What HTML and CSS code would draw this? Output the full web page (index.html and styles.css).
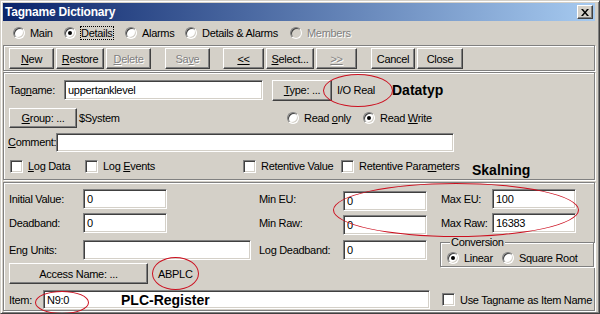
FILE: index.html
```html
<!doctype html>
<html lang="en">
    <head>
        <meta charset="UTF-8" />
        <title>Tagname Dictionary</title>
        <link rel="stylesheet" href="styles.css">
    </head>
    <body>
        <div class="window">
            <div class="titlebar">
                <span class="title">Tagname Dictionary</span>
                <span class="close">
                    <svg width="8" height="7" viewBox="0 0 8 7"><path d="M0 0h2l2 2.4L6 0h2L5 3.5 8 7H6L4 4.6 2 7H0l3-3.5z" fill="#000"/></svg>
                </span>
            </div>

            <div class="tabs">
                <div class="radio tab-main"><span class="dot"></span><span>Main</span></div>
                <div class="radio tab-details"><span class="dot on"></span><span class="focus">Details</span></div>
                <div class="radio tab-alarms"><span class="dot"></span><span>Alarms</span></div>
                <div class="radio tab-both"><span class="dot"></span><span>Details &amp; Alarms</span></div>
                <div class="radio disabled"><span class="dot"></span><span>Members</span></div>
            </div>

            <div class="toolbar etched">
                <div class="btn-group first">
                    <button class="btn w45"><u>N</u>ew</button>
                    <button class="btn w48"><u>R</u>estore</button>
                    <button class="btn w45 disabled"><u>D</u>elete</button>
                </div>
                <div class="btn-group spaced">
                    <button class="btn w45 disabled">Sa<u>v</u>e</button>
                </div>
                <div class="btn-group spaced2">
                    <button class="btn w41"><u>&lt;&lt;</u></button>
                    <button class="btn w48"><u>S</u>elect...</button>
                    <button class="btn w41 disabled"><u>&gt;&gt;</u></button>
                </div>
                <div class="btn-group spaced">
                    <button class="btn w44">Cancel</button>
                    <button class="btn w46">Close</button>
                </div>
            </div>

            <div class="panel upper etched">
                <div class="row r1">
                    <span class="lbl tag-lbl">Tag<u>n</u>ame:</span>
                    <input class="field tag-field" type="text" value="uppertanklevel" readonly />
                    <button class="btn type-btn"><u>T</u>ype: ...</button>
                    <span class="type-val">I/O Real</span>
                    <span class="note">Datatyp</span>
                </div>
                <div class="row r2">
                    <button class="btn group-btn"><u>G</u>roup: ...</button>
                    <span class="group-val">$System</span>
                    <div class="radio read-only"><span class="dot"></span><span>Read <u>o</u>nly</span></div>
                    <div class="radio"><span class="dot on"></span><span>Read <u>W</u>rite</span></div>
                </div>
                <div class="row r3">
                    <span class="lbl comment-lbl"><u>C</u>omment:</span>
                    <input class="field comment-field" type="text" readonly />
                </div>
                <div class="row r4">
                    <div class="checkbox log-data"><span class="box"></span><span><u>L</u>og Data</span></div>
                    <div class="checkbox log-events"><span class="box"></span><span>Log <u>E</u>vents</span></div>
                    <div class="checkbox ret-value"><span class="box"></span><span>Retentive Value</span></div>
                    <div class="checkbox ret-params"><span class="box"></span><span>Retentive Para<u>m</u>eters</span></div>
                    <span class="note skal">Skalning</span>
                </div>
            </div>

            <div class="panel lower etched">
                <div class="row l1">
                    <div class="cell1"><span class="lbl w74">Initial Value:</span><input class="field w84" value="0" readonly /></div>
                    <div class="cell2 low2"><span class="lbl w84">Min EU:</span><input class="field w84" value="0" readonly /></div>
                    <div class="cell3"><span class="lbl w51">Max EU:</span><input class="field w84" value="100" readonly /></div>
                </div>
                <div class="row l2">
                    <div class="cell1"><span class="lbl w74">Deadband:</span><input class="field w84" value="0" readonly /></div>
                    <div class="cell2 low2"><span class="lbl w84">Min Raw:</span><input class="field w84" value="0" readonly /></div>
                    <div class="cell3"><span class="lbl w51">Max Raw:</span><input class="field w84" value="16383" readonly /></div>
                </div>
                <div class="row l3">
                    <div class="cell1"><span class="lbl w74">Eng Units:</span><input class="field w168" readonly /></div>
                    <div class="cell2"><span class="lbl w84">Log Deadband:</span><input class="field w84" value="0" readonly /></div>
                    <div class="conversion">
                        <span class="legend">Conversion</span>
                        <div class="radio linear"><span class="dot on"></span><span>Linear</span></div>
                        <div class="radio"><span class="dot"></span><span>Square Root</span></div>
                    </div>
                </div>
                <div class="row l4">
                    <button class="btn access-btn">Access Name: ...</button>
                    <span class="access-val">ABPLC</span>
                </div>
                <div class="row l5">
                    <span class="lbl w34">Item:</span>
                    <div class="field item-field">
                        <span class="item-val">N9:0</span>
                        <span class="note">PLC-Register</span>
                    </div>
                    <div class="checkbox use-tag"><span class="box"></span><span>Use Tagname as Item Name</span></div>
                </div>
            </div>

            <!-- red hand-drawn marks over the dialog -->
            <span class="mark mark-type"></span>
            <span class="mark mark-scale"></span>
            <span class="mark mark-access"></span>
            <span class="mark mark-item"></span>
        </div>
    </body>
</html>
```

FILE: styles.css
```css
body {
    margin: 0;
    font-family: "Liberation Sans", Arial, sans-serif;
    font-size: 11px;
    letter-spacing: -0.3px;
    color: black;
}

u {
    text-decoration: underline;
    text-underline-offset: 1px;
}

.window {
    position: relative;
    box-sizing: border-box;
    width: 600px;
    height: 314px;
    background: #d4d0c8;
    border: 1px solid;
    border-color: #d4d0c8 #404040 #404040 #d4d0c8;
    box-shadow: inset 1px 1px #fff, inset -1px -1px #808080;
    padding: 2px 4px 2px 2px;
    display: flex;
    flex-direction: column;
    overflow: hidden;
}

.titlebar {
    height: 18px;
    flex-shrink: 0;
    background: linear-gradient(to right, #0a246a, #a6caf0);
    display: flex;
    align-items: center;
    justify-content: space-between;
}

.title {
    color: white;
    font-weight: bold;
    font-size: 12px;
    letter-spacing: -0.2px;
    padding-left: 2px;
}

.close {
    box-sizing: border-box;
    width: 16px;
    height: 14px;
    margin-right: 2px;
    background: #d4d0c8;
    border: 1px solid;
    border-color: #fff #404040 #404040 #fff;
    box-shadow: inset -1px -1px #808080;
    display: flex;
    align-items: center;
    justify-content: center;
}

.tabs {
    height: 24px;
    flex-shrink: 0;
    display: flex;
    align-items: center;
    padding-left: 10px;
}

.tab-main { width: 51px; }
.tab-details { width: 61px; }
.tab-alarms { width: 60px; }
.tab-both { width: 105px; }

.focus {
    outline: 1px dotted black;
    outline-offset: 0;
}

.radio,
.checkbox {
    display: flex;
    align-items: center;
    white-space: nowrap;
}

.dot {
    box-sizing: border-box;
    width: 12px;
    height: 12px;
    margin-right: 5px;
    border-radius: 50%;
    background: white;
    border: 1px solid;
    border-color: #808080 #fff #fff #808080;
    box-shadow: inset 1px 1px #404040, inset -1px -1px #d4d0c8;
    position: relative;
}

.dot.on::after {
    content: "";
    position: absolute;
    left: 3px;
    top: 3px;
    width: 4px;
    height: 4px;
    border-radius: 50%;
    background: black;
}

.box {
    box-sizing: border-box;
    width: 13px;
    height: 13px;
    margin-right: 5px;
    background: white;
    border: 1px solid;
    border-color: #808080 #fff #fff #808080;
    box-shadow: inset 1px 1px #404040, inset -1px -1px #d4d0c8;
}

.disabled {
    color: #808080;
    text-shadow: 1px 1px #fff;
}

.disabled .dot {
    background: #d4d0c8;
}

.etched {
    box-sizing: border-box;
    border: 1px solid #808080;
    box-shadow: inset 1px 1px #fff, 1px 1px #fff;
}

.toolbar {
    height: 26px;
    flex-shrink: 0;
    display: flex;
    padding-top: 2px;
}

.btn-group {
    display: flex;
    gap: 2px;
}

.btn-group.first { margin-left: 5px; }
.btn-group.spaced { margin-left: 14px; }
.btn-group.spaced2 { margin-left: 13px; }

.btn {
    box-sizing: border-box;
    height: 21px;
    padding: 0;
    font-family: inherit;
    font-size: 11px;
    letter-spacing: -0.3px;
    color: black;
    background: #d4d0c8;
    border: 1px solid;
    border-color: #fff #404040 #404040 #fff;
    box-shadow: inset -1px -1px #808080;
    border-radius: 0;
}

.btn.disabled { color: #808080; }

.w41 { width: 41px; }
.w44 { width: 44px; }
.w45 { width: 45px; }
.w46 { width: 46px; }
.w48 { width: 48px; }

.field {
    box-sizing: border-box;
    height: 20px;
    margin: 0;
    padding: 0 3px;
    font-family: inherit;
    font-size: 11px;
    letter-spacing: -0.3px;
    color: black;
    background: white;
    border: 1px solid;
    border-color: #808080 #fff #fff #808080;
    box-shadow: inset 1px 1px #404040, inset -1px -1px #d4d0c8;
    border-radius: 0;
    outline: none;
}

.panel {
    flex-shrink: 0;
    padding: 6px 0 0 5px;
}

.upper {
    height: 108px;
    margin-top: 1px;
}

.lower {
    height: 129px;
    margin-top: 2px;
}

.row {
    display: flex;
    align-items: center;
}

.lbl {
    flex-shrink: 0;
    white-space: nowrap;
}

.note {
    font-weight: bold;
    font-size: 14px;
    letter-spacing: 0;
}

/* upper panel */
.r1 { height: 22px; }
.tag-lbl { width: 55px; }
.tag-field { width: 199px; }
.type-btn { width: 60px; margin-left: 9px; }
.type-val { width: 55px; margin-left: 5px; }

.r2 { height: 21px; margin-top: 6px; }
.group-btn { width: 68px; height: 20px; }
.group-val { width: 208px; margin-left: 2px; }
.read-only { width: 76px; }

.r3 { height: 20px; margin-top: 4px; }
.comment-lbl { width: 48px; margin-left: -1px; }
.comment-field { width: 398px; height: 19px; }

.r4 { height: 18px; margin-top: 5px; padding-left: 1px; }
.log-data { width: 75px; }
.log-events { width: 158px; }
.ret-value { width: 98px; }
.ret-params { width: 131px; }
.skal { align-self: flex-end; margin-bottom: -3px; }

/* lower panel */
.l1, .l2, .l3 { height: 20px; }
.l2 { margin-top: 4px; }
.l3 { margin-top: 7px; }
.l4 { height: 21px; margin-top: 3px; }
.l5 { height: 19px; margin-top: 6px; }

.cell1 { width: 250px; display: flex; align-items: center; }
.cell2 { width: 182px; display: flex; align-items: center; }
.cell3 { display: flex; align-items: center; }
.low2 .field { margin-top: 3px; }

.w34 { width: 34px; }
.w51 { width: 51px; }
.w74 { width: 74px; }
.w84 { width: 84px; }
.w168 { width: 168px; }

.conversion {
    position: relative;
    box-sizing: border-box;
    align-self: flex-start;
    width: 154px;
    height: 25px;
    margin: 2px 0 0 -1px;
    padding: 8px 0 0 6px;
    display: flex;
    border: 1px solid #808080;
    box-shadow: inset 1px 1px #fff, 1px 1px #fff;
}

.legend {
    position: absolute;
    left: 9px;
    top: -7px;
    padding: 0 1px;
    line-height: 12px;
    background: #d4d0c8;
}

.conversion .radio { height: 14px; }
.linear { width: 55px; }

.access-btn { width: 139px; }
.access-val { margin-left: 10px; }

.item-field {
    width: 387px;
    height: 19px;
    display: flex;
    align-items: center;
}

.item-val { width: 74px; }
.use-tag { margin-left: 12px; }

/* red annotation ellipses */
.mark {
    position: absolute;
    border: 1px solid #cc1020;
    border-radius: 50%;
}

.mark-type { left: 322px; top: 73px; width: 68px; height: 31px; }
.mark-scale { left: 332px; top: 182px; width: 244px; height: 52px; }
.mark-access { left: 151px; top: 256px; width: 45px; height: 31px; }
.mark-item { left: 34px; top: 290px; width: 52px; height: 21px; }
```
